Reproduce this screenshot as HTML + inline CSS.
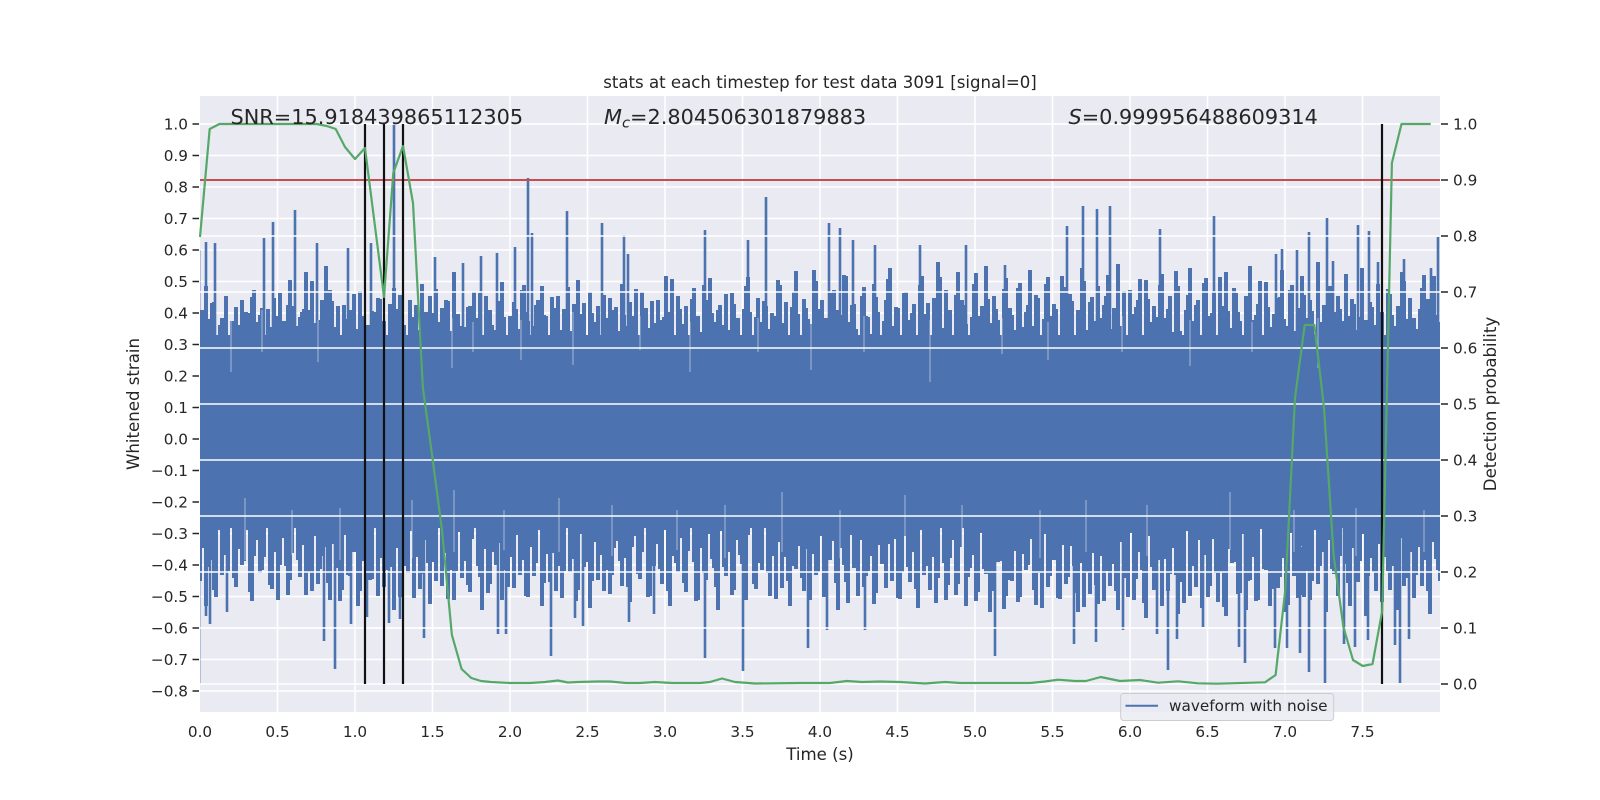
<!DOCTYPE html>
<html><head><meta charset="utf-8"><title>stats</title>
<style>
html,body{margin:0;padding:0;background:#fff;width:1600px;height:800px;overflow:hidden}
svg{display:block}
text{font-family:"DejaVu Sans","Liberation Sans",sans-serif;fill:#262626}
.t{font-size:15.28px}
.l{font-size:16.6px}
.a{font-size:20.83px}
</style></head><body>
<svg xmlns="http://www.w3.org/2000/svg" width="1600" height="800" viewBox="0 0 1600 800">
<defs><clipPath id="ax"><rect x="200" y="96" width="1240" height="616"/></clipPath></defs>
<rect width="1600" height="800" fill="#fff"/>
<rect x="200" y="96" width="1240" height="616" fill="#eaeaf2"/>
<g stroke="#fff" stroke-width="1.5" fill="none">
<path d="M200 124H1440M200 155.5H1440M200 187H1440M200 218.5H1440M200 250H1440M200 281.5H1440M200 313H1440M200 344.5H1440M200 376H1440M200 407.5H1440M200 439H1440M200 470.5H1440M200 502H1440M200 533.5H1440M200 565H1440M200 596.5H1440M200 628H1440M200 659.5H1440M200 691H1440"/>
<path d="M277.5 96V712M355 96V712M432.5 96V712M510 96V712M587.5 96V712M665 96V712M742.5 96V712M820 96V712M897.5 96V712M975 96V712M1052.5 96V712M1130 96V712M1207.5 96V712M1285 96V712M1362.5 96V712"/>
</g>
<g clip-path="url(#ax)">
<rect x="200" y="335" width="1240" height="193" fill="#4c72b0"/>
<path id="tp" fill="#4c72b0" d="M200 430V310h4V286h4V328h4V302h4V345h4V318h4V296h4V335h4V352h4V325h4V300h4V312h4V338h4V290h4V322h4V308h4V345h4V330h4V298h4V316h4V352h4V334h4V280h4V306h4V326h4V312h4V272h4V310h4V340h4V320h4V300h4V266h4V290h4V328h4V306h4V345h4V322h4V310h4V294h4V336h4V316h4V350h4V342h4V312h4V298h4V326h4V346h4V304h4V288h4V320h4V306h4V340h4V300h4V318h4V330h4V284h4V312h4V296h4V348h4V322h4V308h4V300h4V336h4V272h4V314h4V326h4V344h4V306h4V292h4V318h4V340h4V296h4V310h4V330h4V320h4V282h4V346h4V316h4V302h4V334h4V290h4V312h4V352h4V326h4V300h4V286h4V316h4V342h4V308h4V296h4V330h4V320h4V350h4V304h4V280h4V314h4V338h4V292h4V322h4V306h4V346h4V318h4V298h4V310h4V334h4V284h4V326h4V302h4V316h4V344h4V292h4V308h4V328h4V350h4V300h4V320h4V276h4V312h4V340h4V296h4V324h4V306h4V348h4V288h4V316h4V332h4V300h4V278h4V322h4V310h4V344h4V294h4V330h4V304h4V318h4V350h4V286h4V312h4V336h4V298h4V322h4V306h4V346h4V316h4V280h4V328h4V302h4V340h4V292h4V314h4V350h4V308h4V324h4V270h4V338h4V300h4V318h4V344h4V290h4V310h4V330h4V276h4V322h4V304h4V348h4V296h4V316h4V334h4V284h4V312h4V342h4V300h4V268h4V326h4V308h4V352h4V292h4V320h4V304h4V336h4V276h4V314h4V346h4V298h4V262h4V328h4V290h4V310h4V342h4V272h4V300h4V324h4V350h4V284h4V316h4V306h4V266h4V334h4V296h4V320h4V346h4V278h4V308h4V330h4V288h4V352h4V312h4V270h4V326h4V298h4V342h4V284h4V316h4V304h4V336h4V276h4V322h4V294h4V350h4V310h4V268h4V330h4V302h4V344h4V286h4V318h4V296h4V334h4V308h4V264h4V326h4V348h4V290h4V314h4V300h4V340h4V280h4V322h4V306h4V352h4V274h4V318h4V296h4V332h4V286h4V344h4V310h4V268h4V324h4V300h4V338h4V278h4V316h4V292h4V350h4V306h4V272h4V328h4V288h4V312h4V342h4V296h4V266h4V320h4V304h4V336h4V282h4V348h4V314h4V298h4V270h4V326h4V290h4V344h4V308h4V276h4V318h4V300h4V334h4V262h4V322h4V350h4V286h4V312h4V296h4V340h4V274h4V316h4V304h4V330h4V268h4V320h4V302h4V338h4V284h4V312h4V346h4V294h4V326h4V306h4V272h4V334h4V298h4V318h4V348h4V288h4V310h4V330h4V276h4V322h4V300h4V340h4H1440V430H200Z"/>
<path id="bt" fill="#4c72b0" d="M200 430V548h4V606h4V560h4V590h4V530h4V575h4V552h4V522h4V578h4V548h4V565h4V530h4V592h4V556h4V540h4V570h4V520h4V585h4V552h4V600h4V538h4V566h4V580h4V528h4V560h4V545h4V595h4V572h4V536h4V584h4V556h4V520h4V600h4V544h4V568h4V590h4V530h4V576h4V552h4V606h4V538h4V564h4V580h4V524h4V596h4V558h4V570h4V535h4V610h4V548h4V582h4V566h4V530h4V598h4V554h4V574h4V540h4V604h4V562h4V522h4V586h4V548h4V570h4V600h4V532h4V578h4V556h4V592h4V526h4V566h4V610h4V544h4V584h4V552h4V530h4V600h4V570h4V538h4V588h4V520h4V560h4V596h4V546h4V576h4V530h4V606h4V554h4V582h4V540h4V566h4V598h4V524h4V572h4V550h4V590h4V534h4V562h4V608h4V542h4V580h4V516h4V570h4V594h4V548h4V528h4V586h4V558h4V602h4V536h4V574h4V552h4V522h4V596h4V566h4V544h4V584h4V530h4V606h4V556h4V572h4V538h4V592h4V520h4V562h4V600h4V548h4V580h4V534h4V568h4V610h4V526h4V576h4V552h4V590h4V540h4V564h4V600h4V528h4V584h4V550h4V570h4V518h4V596h4V556h4V542h4V588h4V530h4V606h4V566h4V546h4V578h4V524h4V600h4V554h4V572h4V536h4V592h4V560h4V520h4V610h4V548h4V582h4V532h4V568h4V596h4V540h4V576h4V556h4V604h4V528h4V564h4V588h4V544h4V520h4V598h4V572h4V536h4V582h4V552h4V608h4V530h4V566h4V590h4V546h4V578h4V524h4V600h4V558h4V540h4V584h4V516h4V606h4V568h4V550h4V592h4V532h4V574h4V612h4V544h4V562h4V526h4V596h4V580h4V538h4V602h4V554h4V570h4V522h4V590h4V548h4V608h4V534h4V576h4V560h4V598h4V528h4V584h4V546h4V566h4V612h4V520h4V572h4V594h4V540h4V604h4V556h4V530h4V586h4V564h4V610h4V542h4V578h4V524h4V600h4V552h4V570h4V618h4V536h4V590h4V560h4V606h4V530h4V574h4V548h4V614h4V582h4V522h4V596h4V566h4V540h4V608h4V554h4V586h4V528h4V602h4V572h4V616h4V544h4V562h4V594h4V534h4V610h4V580h4V550h4V600h4V526h4V570h4V606h4V542h4V588h4V558h4V612h4V532h4V576h4V598h4V546h4V568h4V600h4V530h4V584h4V552h4V612h4V540h4V574h4V596h4V526h4V564h4V606h4V548h4V582h4V534h4V616h4V558h4V572h4V544h4V602h4V528h4V590h4V566h4V610h4V538h4V578h4V552h4V598h4V524h4V586h4V560h4V614h4V542h4V570h4V604h4V534h4V580h4V556h4H1440V430H200Z"/>
<use href="#tp" transform="translate(-142,9)"/>
<use href="#tp" transform="translate(1098,9)"/>
<use href="#bt" transform="translate(-142,-9)"/>
<use href="#bt" transform="translate(1098,-9)"/>
<path fill="none" stroke="#4c72b0" stroke-width="2.6" d="M206 242V360M215 243V360M264 238V360M273 222V360M295 210V360M317 243V360M348 248V360M371 243V360M394 124V360M435 257V360M463 263V360M481 256V360M497 253V360M515 247V360M528 178V360M532 233V360M567 211V360M602 223V360M624 235V360M628 254V360M705 230V360M748 240V360M766 197V360M829 223V360M840 228V360M853 240V360M875 245V360M920 245V360M966 245V360M1005 265V360M1067 226V360M1083 206V360M1097 209V360M1110 206V360M1160 229V360M1214 216V360M1276 254V360M1282 249V360M1297 250V360M1309 232V360M1327 218V360M1333 261V360M1358 225V360M1369 231V360M1378 262V360M1404 259V360M1431 268V360M1438 237V360M206 616V510M210 624V510M227 612V510M324 641V510M335 669V510M351 624V510M367 617V510M389 623V510M400 619V510M424 638V510M498 634V510M506 634V510M551 656V510M575 618V510M583 626V510M629 622V510M654 614V510M705 658V510M743 671V510M808 648V510M827 630V510M865 630V510M918 607V510M995 656V510M1074 644V510M1096 642V510M1123 630V510M1157 634V510M1168 670V510M1177 639V510M1203 627V510M1239 647V510M1245 663V510M1275 648V510M1287 648V510M1300 653V510M1309 672V510M1325 683V510M1344 644V510M1355 647V510M1368 640V510M1395 645V510M1400 683V510M1409 639V510"/>
</g>
<path fill="none" stroke="#eaeaf2" stroke-width="1" opacity=".6" d="M231 315V372M262 310V352M318 320V362M452 318V368M473 322V352M521 320V360M573 312V365M640 316V350M690 322V372M758 318V352M811 320V370M864 316V352M930 320V382M1002 318V354M1048 322V360M1122 316V352M1190 320V366M1252 322V352M1318 318V368M1388 320V352M245 560V498M292 555V510M340 560V508M412 558V500M454 552V490M504 550V510M559 552V498M612 556V505M677 550V510M725 558V505M782 552V492M840 558V510M905 552V495M962 555V505M1040 558V510M1086 552V500M1147 556V505M1230 550V492M1294 552V510M1356 556V508M1424 552V510"/>
<path d="M200.5 250V684" stroke="#4c72b0" stroke-width="1" opacity=".35"/>
<path d="M200 124H1440M200 180H1440M200 236H1440M200 292H1440M200 348H1440M200 404H1440M200 460H1440M200 516H1440M200 572H1440M200 628H1440M200 684H1440" stroke="#fff" stroke-width="1.5" fill="none"/>
<path d="M200 180H1440" stroke="#c44e52" stroke-width="2"/>
<path d="M365 124V684M384 124V684M403 124V684M1382 124V684" stroke="#111" stroke-width="2.2"/>
<polyline fill="none" stroke="#55a868" stroke-width="2.2" stroke-linejoin="round" points="200,237 209.7,129 219.4,124 316.7,124 326.7,126 335.7,129 345,147 355,159 365,148 384,297 393.3,173 403,146 413,203 422.9,388 432.6,459 442,530 451.9,635 461.6,669 471.3,678 481,681 491,682 510,683 530,683 545,682 558,680.5 568,682.5 578,682 597,681.5 610,681.5 626,683 640,683 655,682 672,683 700,683 710,682 722,678.5 735,682 755,683.5 800,683 830,683 847,681 862,682 880,681.5 900,682 925,683.5 945,682 960,683 1000,683 1030,683 1045,681.5 1058,679.7 1075,681 1086,681 1100.7,677 1120,681 1140,680 1158,682.7 1178,681.3 1198,683.3 1217,683.7 1265,682.3 1275.6,675 1285.3,590 1295,398 1304.7,325 1314.4,325 1324,408 1333.7,556 1343.4,627 1353,660 1362.8,666 1372.5,664 1382.2,611 1391.9,163 1401.5,124 1430.7,124"/>
<path d="M192.5 124H199M192.5 155.5H199M192.5 187H199M192.5 218.5H199M192.5 250H199M192.5 281.5H199M192.5 313H199M192.5 344.5H199M192.5 376H199M192.5 407.5H199M192.5 439H199M192.5 470.5H199M192.5 502H199M192.5 533.5H199M192.5 565H199M192.5 596.5H199M192.5 628H199M192.5 659.5H199M192.5 691H199" stroke="#262626" stroke-width="1.4"/>
<path d="M1441 124H1448M1441 180H1448M1441 236H1448M1441 292H1448M1441 348H1448M1441 404H1448M1441 460H1448M1441 516H1448M1441 572H1448M1441 628H1448M1441 684H1448" stroke="#262626" stroke-width="1.4"/>
<g class="t" text-anchor="end">
<text x="188" y="129.5">1.0</text><text x="188" y="161">0.9</text><text x="188" y="192.5">0.8</text><text x="188" y="224">0.7</text><text x="188" y="255.5">0.6</text><text x="188" y="287">0.5</text><text x="188" y="318.5">0.4</text><text x="188" y="350">0.3</text><text x="188" y="381.5">0.2</text><text x="188" y="413">0.1</text><text x="188" y="444.5">0.0</text><text x="188" y="476">−0.1</text><text x="188" y="507.5">−0.2</text><text x="188" y="539">−0.3</text><text x="188" y="570.5">−0.4</text><text x="188" y="602">−0.5</text><text x="188" y="633.5">−0.6</text><text x="188" y="665">−0.7</text><text x="188" y="696.5">−0.8</text>
</g>
<g class="t">
<text x="1453" y="129.5">1.0</text><text x="1453" y="185.5">0.9</text><text x="1453" y="241.5">0.8</text><text x="1453" y="297.5">0.7</text><text x="1453" y="353.5">0.6</text><text x="1453" y="409.5">0.5</text><text x="1453" y="465.5">0.4</text><text x="1453" y="521.5">0.3</text><text x="1453" y="577.5">0.2</text><text x="1453" y="633.5">0.1</text><text x="1453" y="689.5">0.0</text>
</g>
<g class="t" text-anchor="middle">
<text x="200" y="737">0.0</text><text x="277.5" y="737">0.5</text><text x="355" y="737">1.0</text><text x="432.5" y="737">1.5</text><text x="510" y="737">2.0</text><text x="587.5" y="737">2.5</text><text x="665" y="737">3.0</text><text x="742.5" y="737">3.5</text><text x="820" y="737">4.0</text><text x="897.5" y="737">4.5</text><text x="975" y="737">5.0</text><text x="1052.5" y="737">5.5</text><text x="1130" y="737">6.0</text><text x="1207.5" y="737">6.5</text><text x="1285" y="737">7.0</text><text x="1362.5" y="737">7.5</text>
</g>
<text class="l" x="820" y="88" text-anchor="middle">stats at each timestep for test data 3091 [signal=0]</text>
<text class="l" x="820" y="760" text-anchor="middle">Time (s)</text>
<text class="l" transform="translate(139,404) rotate(-90)" text-anchor="middle">Whitened strain</text>
<text class="l" transform="translate(1496,404) rotate(-90)" text-anchor="middle">Detection probability</text>
<text class="a" x="230.5" y="124">SNR=15.918439865112305</text>
<text class="a" x="604" y="124"><tspan font-style="italic">M</tspan><tspan font-style="italic" font-size="14.6px" dy="3.5">c</tspan><tspan dy="-3.5">=2.804506301879883</tspan></text>
<text class="a" x="1068.5" y="124"><tspan font-style="italic">S</tspan>=0.999956488609314</text>
<rect x="1120.7" y="693.5" width="213" height="27" rx="3" fill="#eaeaf2" fill-opacity=".8" stroke="#cccccc" stroke-width="1"/>
<path d="M1125.5 705.7H1158" stroke="#4c72b0" stroke-width="2"/>
<text class="t" x="1169" y="711">waveform with noise</text>
</svg>
</body></html>
